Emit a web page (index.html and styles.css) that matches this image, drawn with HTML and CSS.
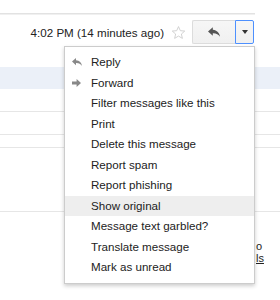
FILE: index.html
```html
<!DOCTYPE html>
<html lang="en">
<head>
<meta charset="UTF-8">
<title>Message menu</title>
<link rel="stylesheet" href="styles.css">
</head>
<body>

<div class="page">
  <div class="topline"></div>

  <div class="header">
    <span class="date">4:02 PM (14 minutes ago)</span>
    <svg class="star" width="15" height="15" viewBox="0 0 24 24">
      <path d="M12 2.5l2.9 6.6 7.1.6-5.4 4.7 1.6 7-6.2-3.7-6.2 3.7 1.6-7L2 9.7l7.1-.6z" fill="none" stroke="#ccc" stroke-width="1.4" stroke-linejoin="round"/>
    </svg>
    <div class="btns">
      <div class="btn reply">
        <svg width="12" height="10" viewBox="0 0 10 8">
          <path d="M4 0L0 3.6 4 7.2V5.1C6.8 5 8.7 6 10 8 9.6 4.8 7.6 2.6 4 2.2z" fill="#555"/>
        </svg>
      </div>
      <div class="btn more">
        <span class="caret"></span>
      </div>
    </div>
  </div>

  <div class="band"></div>
  <div class="rule r1"></div>
  <div class="rule r2"></div>
  <div class="rule r3"></div>
  <div class="rule r4"></div>

  <div class="details">
    <div>o</div>
    <div><u>ls</u></div>
  </div>
</div>

<div class="menu">
  <div class="item">
    <svg class="ico" width="10" height="8" viewBox="0 0 10 8">
      <path d="M4 0L0 3.6 4 7.2V5.1C6.8 5 8.7 6 10 8 9.6 4.8 7.6 2.6 4 2.2z" fill="#888"/>
    </svg>
    Reply
  </div>
  <div class="item">
    <svg class="ico" width="9" height="8" viewBox="0 0 9 8">
      <path d="M0 2.6H4.6V0L9 4 4.6 8V5.4H0z" fill="#888"/>
    </svg>
    Forward
  </div>
  <div class="item">Filter messages like this</div>
  <div class="item">Print</div>
  <div class="item">Delete this message</div>
  <div class="item">Report spam</div>
  <div class="item">Report phishing</div>
  <div class="item hover">Show original</div>
  <div class="item">Message text garbled?</div>
  <div class="item">Translate message</div>
  <div class="item">Mark as unread</div>
</div>

</body>
</html>
```

FILE: styles.css
```css
body {
  margin: 0;
  font-family: "Liberation Sans", Arial, sans-serif;
  font-size: 11.6px;
  color: #222;
  background: #fff;
}
.page {
  width: 280px;
  padding-top: 13px;
}
.topline {
  width: 255px;
  height: 1px;
  background: #e2e2e2;
  border-bottom: 1px solid #f0f0f0;
}
.header {
  width: 254px;
  height: 24px;
  margin-top: 5px;
  display: flex;
  align-items: center;
  justify-content: flex-end;
}
.date {
  margin-right: 7px;
}
.star {
  margin-right: 6px;
}
.btns {
  display: flex;
  height: 24px;
}
.btn {
  box-sizing: border-box;
  height: 24px;
  display: flex;
  align-items: center;
  justify-content: center;
  background: linear-gradient(#f6f6f6, #f0f0f0);
  border: 1px solid #dcdcdc;
}
.reply {
  width: 43px;
  border-radius: 2px 0 0 2px;
  border-right: none;
}
.more {
  width: 19px;
  border-color: #4d90fe;
  border-radius: 0 2px 2px 0;
}
.caret {
  width: 0;
  height: 0;
  border-left: 3.5px solid transparent;
  border-right: 3.5px solid transparent;
  border-top: 4px solid #333;
}
.band {
  height: 22px;
  margin-top: 23px;
  background: #ebf0f8;
}
.rule {
  height: 1px;
  background: #e6e6e6;
}
.r1 { margin-top: 22px; }
.r2 { margin-top: 22px; }
.r3 { margin-top: 12px; }
.r4 { margin-top: 63px; }
.details {
  margin-top: 28px;
  padding-left: 256px;
  font-size: 11px;
  line-height: 12px;
}
.menu {
  position: absolute;
  left: 64px;
  top: 46px;
  width: 189px;
  padding: 5px 0 5px;
  background: #fff;
  border: 1px solid rgba(0,0,0,0.2);
  box-shadow: 0 2px 4px rgba(0,0,0,0.2);
}
.item {
  position: relative;
  height: 20.5px;
  line-height: 20.5px;
  padding-left: 26px;
  white-space: nowrap;
}
.item.hover {
  background: #eee;
}
.ico {
  position: absolute;
  left: 7px;
  top: 6px;
}
```
